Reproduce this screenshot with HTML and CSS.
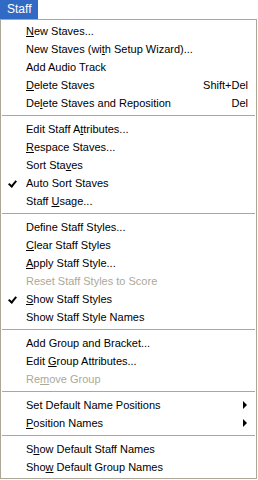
FILE: index.html
```html
<!DOCTYPE html>
<html lang="en">

<head>
    <meta charset="UTF-8">
    <title>Staff Menu</title>
    <link rel="stylesheet" href="styles.css">
</head>

<body>
    <div class="menubar">
        <span class="menubar-item active">Staff</span>
    </div>
    <div class="menu">
        <div class="item"><span class="label"><u>N</u>ew Staves...</span></div>
        <div class="item"><span class="label">New Staves (wi<u>t</u>h Setup Wizard)...</span></div>
        <div class="item"><span class="label">Add Audio Track</span></div>
        <div class="item"><span class="label"><u>D</u>elete Staves</span><span class="key">Shift+Del</span></div>
        <div class="item"><span class="label">De<u>l</u>ete Staves and Reposition</span><span class="key">Del</span></div>
        <div class="sep"></div>

        <div class="item"><span class="label">Edit Staff A<u>t</u>tributes...</span></div>
        <div class="item"><span class="label"><u>R</u>espace Staves...</span></div>
        <div class="item"><span class="label">Sort Sta<u>v</u>es</span></div>
        <div class="item checked"><span class="label">Auto Sort Staves</span></div>
        <div class="item"><span class="label">Staff <u>U</u>sage...</span></div>
        <div class="sep"></div>

        <div class="item"><span class="label">Define Staff Styles...</span></div>
        <div class="item"><span class="label"><u>C</u>lear Staff Styles</span></div>
        <div class="item"><span class="label"><u>A</u>pply Staff Style...</span></div>
        <div class="item disabled"><span class="label">Reset Staff Styles to Score</span></div>
        <div class="item checked"><span class="label"><u>S</u>how Staff Styles</span></div>
        <div class="item"><span class="label">Show Staff Style Names</span></div>
        <div class="sep"></div>

        <div class="item"><span class="label">Add Group and Bracket...</span></div>
        <div class="item"><span class="label">Edit <u>G</u>roup Attributes...</span></div>
        <div class="item disabled"><span class="label">Re<u>m</u>ove Group</span></div>
        <div class="sep"></div>

        <div class="item submenu"><span class="label">Set Default Name Positions</span></div>
        <div class="item submenu"><span class="label"><u>P</u>osition Names</span></div>
        <div class="sep"></div>

        <div class="item"><span class="label">S<u>h</u>ow Default Staff Names</span></div>
        <div class="item"><span class="label">Sho<u>w</u> Default Group Names</span></div>
    </div>
</body>

</html>
```

FILE: styles.css
```css
body {
    margin: 0;
    background-color: #ffffff;
    font-family: "Liberation Sans", Arial, sans-serif;
    font-size: 11px;
    color: #000;
}

.menubar {
    display: flex;
    height: 19px;
}

.menubar-item {
    padding: 0 7px;
    line-height: 19px;
    font-size: 12px;
}

.menubar-item.active {
    background-color: #316ac5;
    color: #fff;
}

.menu {
    width: 255px;
    border: 1px solid #aca899;
    padding: 2px 0;
    background-color: #fff;
}

.item {
    display: flex;
    align-items: center;
    height: 18px;
    padding: 0 8px 0 25px;
    position: relative;
}

.label {
    flex: 1;
    white-space: nowrap;
}

.key {
    white-space: nowrap;
}

.disabled {
    color: #aca899;
}

.checked::before {
    content: "";
    position: absolute;
    left: 9px;
    top: 5px;
    width: 3px;
    height: 6px;
    border-right: 2px solid #000;
    border-bottom: 2px solid #000;
    transform: rotate(40deg);
}

.submenu::after {
    content: "";
    margin-right: 1px;
    border-left: 4px solid #000;
    border-top: 4px solid transparent;
    border-bottom: 4px solid transparent;
}

.sep {
    height: 1px;
    background-color: #aca899;
    margin: 3px 1px 4px;
}
```
